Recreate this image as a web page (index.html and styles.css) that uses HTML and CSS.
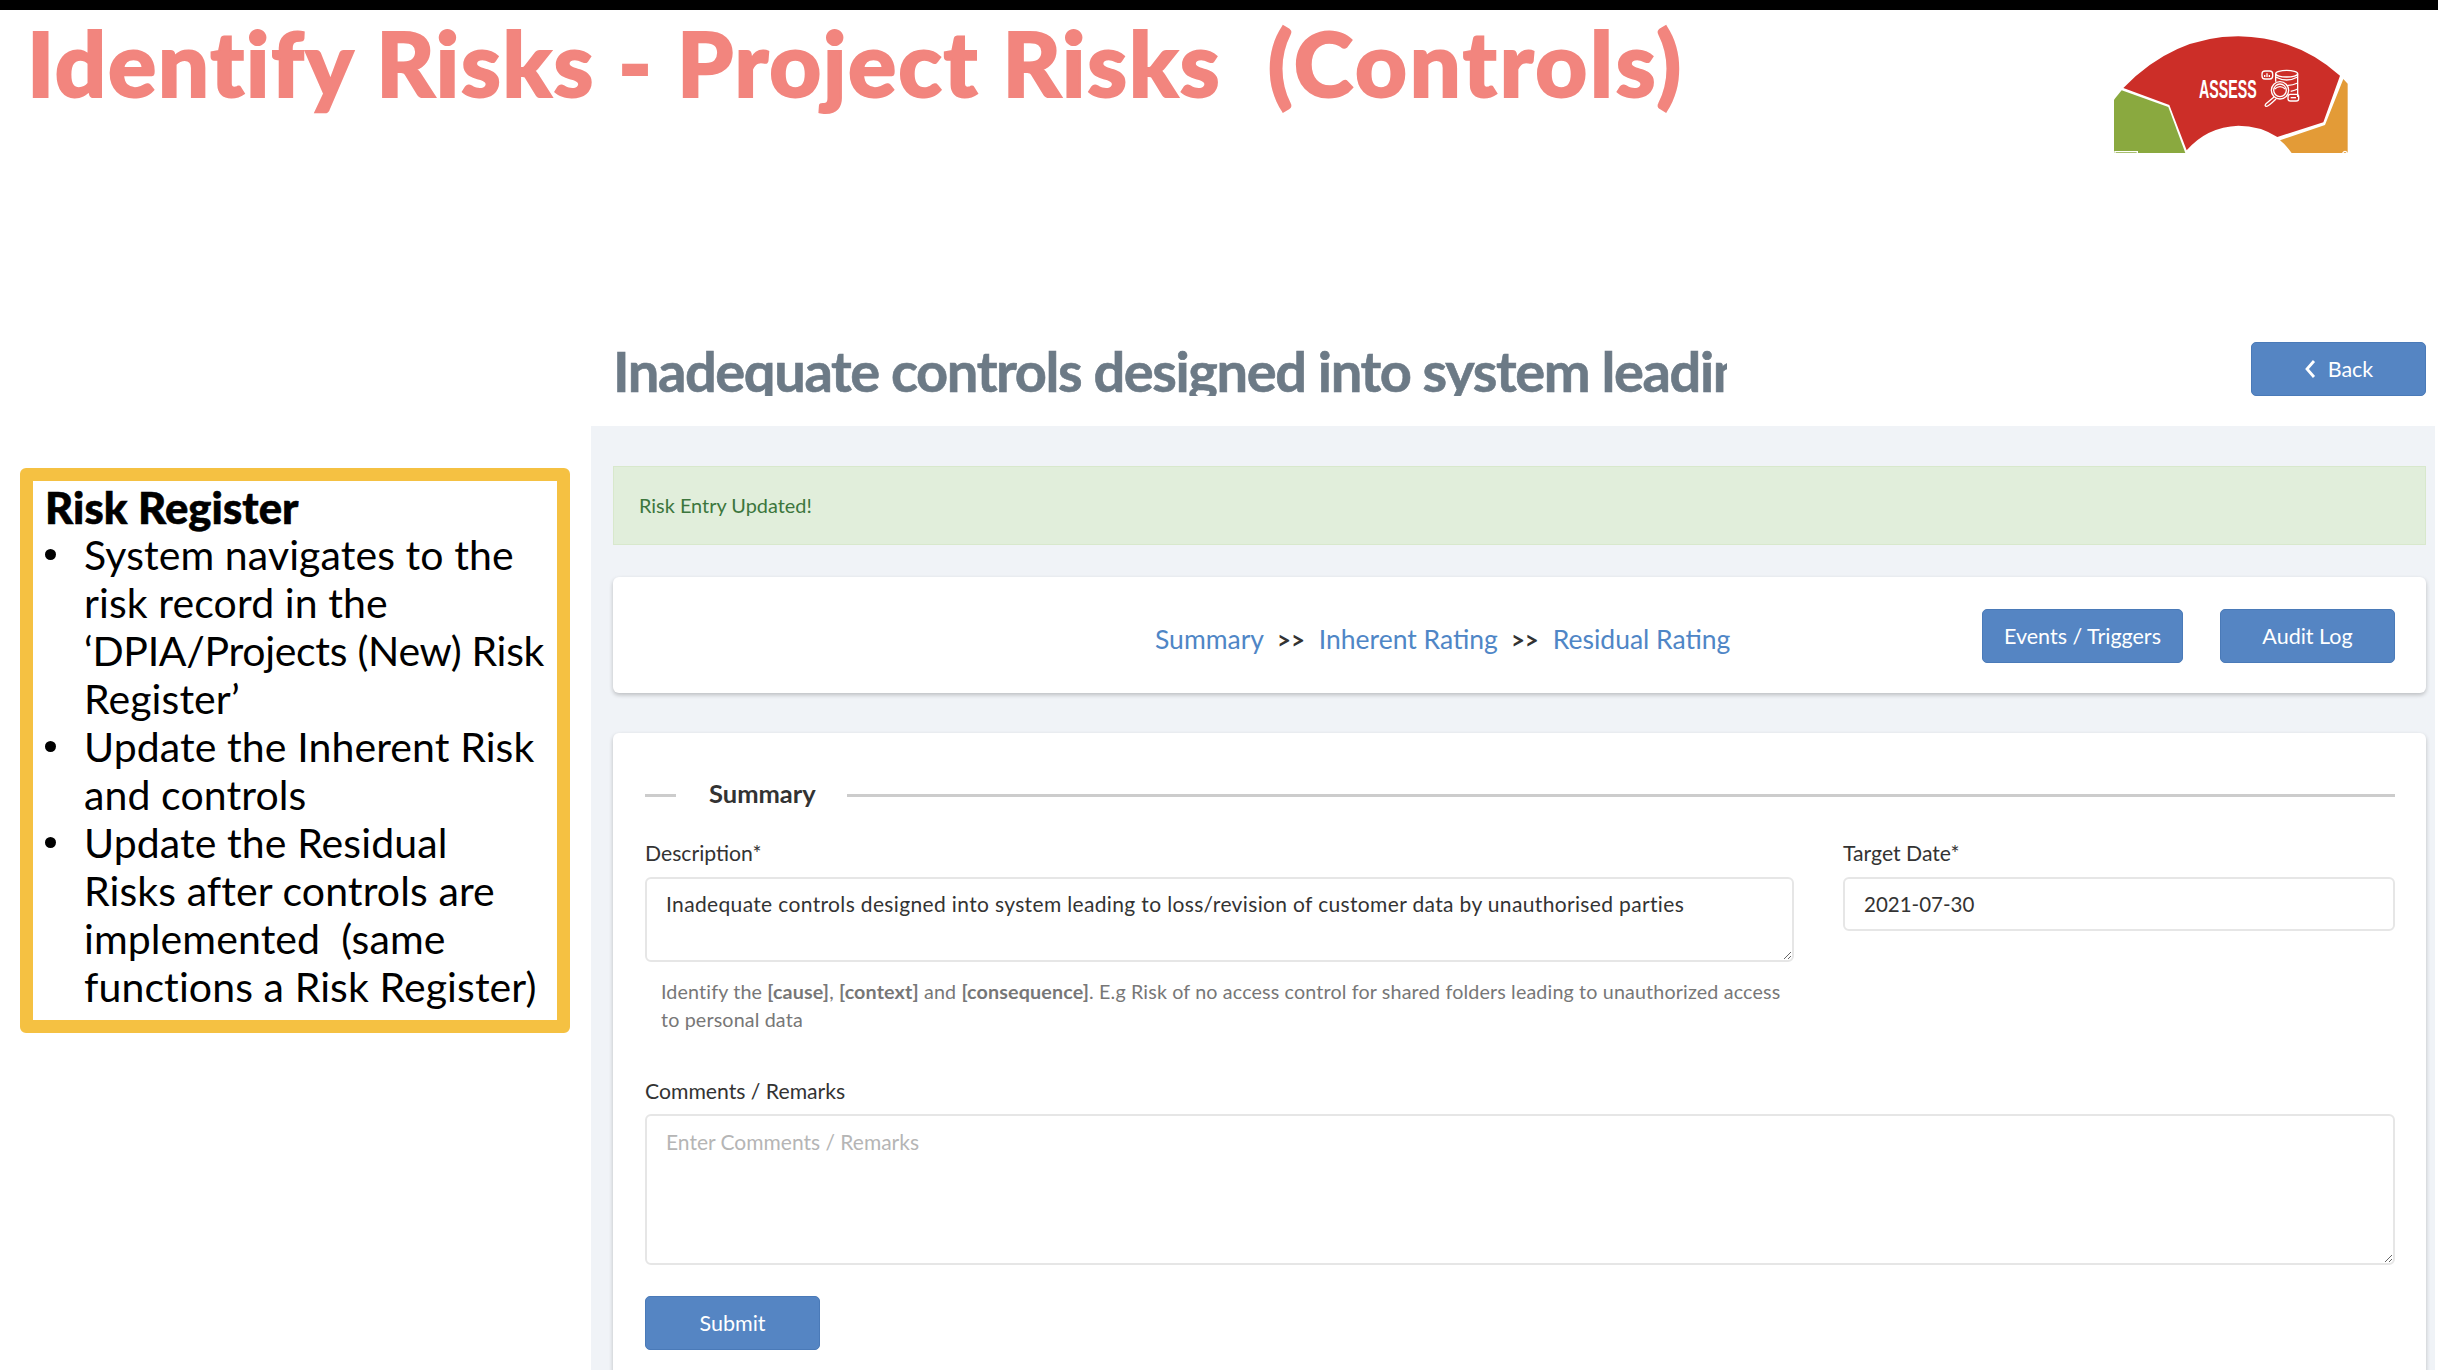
FILE: index.html
```html
<!DOCTYPE html>
<html lang="en">
<head>
<meta charset="utf-8">
<title>Identify Risks - Project Risks (Controls)</title>
<link rel="stylesheet" href="styles.css">
</head>
<body>
<div class="slide">
  <div class="topbar"></div>
  <header class="slide-head">
    <h1 class="slide-title">Identify Risks - Project Risks  <span class="title-paren">(Controls)</span></h1>
    <svg class="logo" viewBox="162 100 702 360" aria-label="Assess">
      <path class="logo-red" d="M190 265 Q340 110 535 110 Q710 112 840 228 L790 368 L652 412 Q600 378 535 378 Q440 382 380 452 L328 316 Z"/>
      <path class="logo-green" d="M185 272 L325 322 L376 460 L162 460 L162 300 Z"/>
      <path class="logo-orange" d="M850 238 L863 252 L863 460 L695 460 Q680 438 660 422 L795 376 Z"/>
      <path class="logo-line" d="M165 460 V456 H232 V460 M848 460 Q855 450 862 460"/>
      <text class="logo-text" x="417" y="295" textLength="173" lengthAdjust="spacingAndGlyphs">ASSESS</text>
      <g class="logo-line">
        <rect x="606" y="214" width="32" height="24" rx="9"/>
        <path d="M614 232 V226 M621 232 V221 M628 232 V226"/>
        <ellipse cx="680" cy="222" rx="33" ry="10"/>
        <path d="M647 222 V246 M713 222 V292 M647 232 Q680 250 713 232 M680 258 Q700 256 713 250 M692 275 Q705 272 713 268"/>
        <circle cx="660" cy="272" r="26"/>
        <circle cx="660" cy="272" r="19"/>
        <path d="M642 292 L618 312 Q612 320 620 320 Q625 320 648 298"/>
        <rect x="684" y="284" width="32" height="20" rx="7"/>
        <path d="M692 294 H708"/>
        <path d="M644 268 Q660 254 676 268"/>
      </g>
    </svg>
  </header>
  <div class="main">
    <aside class="side">
      <div class="note">
        <div class="note-title">Risk Register</div>
        <ul class="note-list">
          <li>System navigates to the<br>risk record in the<br><span class="tight">‘DPIA/Projects (New) Risk</span><br>Register’</li>
          <li>Update the Inherent Risk<br>and controls</li>
          <li>Update the Residual<br>Risks after controls are<br>implemented  (same<br>functions a Risk Register)</li>
        </ul>
      </div>
    </aside>
    <section class="app">
      <div class="app-head">
        <h2 class="app-title">Inadequate controls designed into system leading to loss/revision of customer data by unauthorised parties</h2>
        <a class="btn btn-back"><svg class="chev" viewBox="0 0 12 20"><path d="M10 2 L3 10 L10 18"/></svg>Back</a>
      </div>
      <div class="panel">
        <div class="alert">Risk Entry Updated!</div>
        <nav class="card nav-card">
          <div class="crumbs">
            <a class="crumb">Summary</a><span class="sep">&gt;&gt;</span><a class="crumb">Inherent Rating</a><span class="sep">&gt;&gt;</span><a class="crumb">Residual Rating</a>
          </div>
          <div class="nav-actions">
            <a class="btn btn-events">Events / Triggers</a>
            <a class="btn btn-audit">Audit Log</a>
          </div>
        </nav>
        <form class="card form-card">
          <div class="legend"><span class="legend-text">Summary</span></div>
          <div class="row">
            <div class="col-desc">
              <label class="label">Description*</label>
              <textarea class="field area-desc">Inadequate controls designed into system leading to loss/revision of customer data by unauthorised parties</textarea>
              <p class="help">Identify the <b>[cause]</b>, <b>[context]</b> and <b>[consequence]</b>. E.g Risk of no access control for shared folders leading to unauthorized access to personal data</p>
            </div>
            <div class="col-date">
              <label class="label">Target Date*</label>
              <input class="field input-date" type="text" value="2021-07-30">
            </div>
          </div>
          <label class="label">Comments / Remarks</label>
          <textarea class="field area-comments" placeholder="Enter Comments / Remarks"></textarea>
          <a class="btn btn-submit">Submit</a>
        </form>
      </div>
    </section>
  </div>
</div>
</body>
</html>
```
FILE: styles.css
```css
* { box-sizing: border-box; }
html, body { margin: 0; padding: 0; background: #fff; }
.slide { width: 2438px; height: 1370px; overflow: hidden; display: flex; flex-direction: column; font-family: Lato, "Liberation Sans", sans-serif; }
.topbar { height: 10px; background: #000; flex: none; }

.slide-head { height: 316px; flex: none; display: flex; justify-content: space-between; align-items: flex-start; padding: 0 90px 0 27px; }
.slide-title { margin: 0; font-size: 90px; line-height: 104px; font-weight: 900; color: #f2857e; white-space: pre; letter-spacing: 1.8px; -webkit-text-stroke: 2px #f2857e; }
.title-paren { letter-spacing: 2.8px; }
.logo { width: 234px; height: 120px; margin-top: 23px; }
.logo-red { fill: #cc2e28; }
.logo-green { fill: #8aa93f; }
.logo-orange { fill: #e39b37; }
.logo-line { fill: none; stroke: #fff; stroke-width: 4; }
.logo-text { fill: #fff; font-family: "Liberation Sans", sans-serif; font-weight: 700; font-size: 76px; }

.main { flex: 1; display: grid; grid-template-columns: 591px 1fr; min-height: 0; }
.side { padding: 142px 0 0 20px; }
.note { width: 550px; height: 565px; border: 13px solid #f5c142; border-radius: 6px; padding: 2px 0 0 12px; background: #fff; color: #000; font-size: 41px; line-height: 48px; letter-spacing: .1px; }
.note-title { font-weight: 900; font-size: 43.5px; -webkit-text-stroke: .6px #000; }
.note-list { list-style: none; margin: 0; padding: 0; }
.note-list li { position: relative; padding-left: 39px; white-space: pre; }
.note-list li::before { content: ""; position: absolute; left: 0; top: 18px; width: 11px; height: 11px; border-radius: 50%; background: #000; }
.tight { letter-spacing: -.3px; }

.app { display: flex; flex-direction: column; min-width: 0; color: #333; margin-right: 3px; }
.app-head { height: 100px; flex: none; display: flex; justify-content: space-between; align-items: flex-start; padding: 16px 9px 0 22px; }
.app-title { margin: 5px 0 0; width: 1114px; height: 49px; overflow: hidden; white-space: nowrap; font-size: 56px; line-height: 48px; font-weight: 700; color: #6c7a86; letter-spacing: -1.4px; -webkit-text-stroke: .6px #6c7a86; }

.btn { display: flex; align-items: center; justify-content: center; height: 54px; border: 1px solid #4a7ab8; border-radius: 5px; background: #5585c3; color: #fff; font-size: 21.5px; }
.btn-back { width: 175px; gap: 12px; }
.chev { width: 12px; height: 20px; fill: none; stroke: #fff; stroke-width: 2.8; }
.btn-events { width: 201px; }
.btn-audit { width: 175px; }
.btn-submit { width: 175px; }

.panel { flex: 1; min-height: 0; background: #f0f3f7; padding: 40px 9px 0 22px; }
.alert { height: 79px; display: flex; align-items: center; padding: 0 0 2px 25px; background: #e1eedb; border: 1px solid #d8e8cc; color: #3c763d; font-size: 19.9px; }
.card { background: #fff; border-radius: 6px; box-shadow: 0 2px 4px rgba(0,0,0,.22); }
.nav-card { height: 116px; margin-top: 32px; display: flex; align-items: center; padding: 0 31px 0 542px; justify-content: space-between; }
.crumbs { display: flex; align-items: center; font-size: 26.5px; padding-top: 8px; }
.crumb { color: #4f86c6; }
.sep { margin: 0 14px 0 13px; color: #333; font-size: 24px; font-weight: 700; }
.nav-actions { display: flex; gap: 37px; margin-top: 2px; }

.form-card { margin-top: 40px; height: 700px; padding: 46px 31px 0 32px; }
.legend { display: flex; align-items: center; gap: 31px; height: 32px; }
.legend::before { content: ""; width: 31px; height: 3px; background: #ccc; }
.legend::after { content: ""; flex: 1; height: 3px; background: #ccc; }
.legend-text { font-size: 25.5px; font-weight: 700; color: #333; margin-left: 2px; position: relative; top: -2px; }
.row { display: flex; gap: 49px; }
.col-desc { width: 1149px; }
.col-date { flex: 1; }
.label { display: block; font-size: 21.2px; line-height: 26px; color: #333; }
.row .label { margin-top: 29px; margin-bottom: 11px; }
.field { display: block; width: 100%; border: 2px solid #e6e6e6; border-radius: 6px; background: #fff; color: #333; font-family: Lato, "Liberation Sans", sans-serif; font-size: 21px; outline: none; }
.area-desc { height: 85px; padding: 12px 19px; line-height: 26px; letter-spacing: .35px; }
.input-date { height: 54px; padding: 0 19px; font-size: 20.5px; }
.help { margin: 16px 0 0 16px; font-size: 19.7px; line-height: 28px; color: #777; height: 102px; letter-spacing: .15px; }
.form-card > .label { margin-top: -2px; margin-bottom: 10px; }
.area-comments { height: 151px; padding: 13px 19px; line-height: 26px; }
.area-comments::placeholder { color: #b5b5b5; opacity: 1; }
.btn-submit { margin-top: 31px; }
```
